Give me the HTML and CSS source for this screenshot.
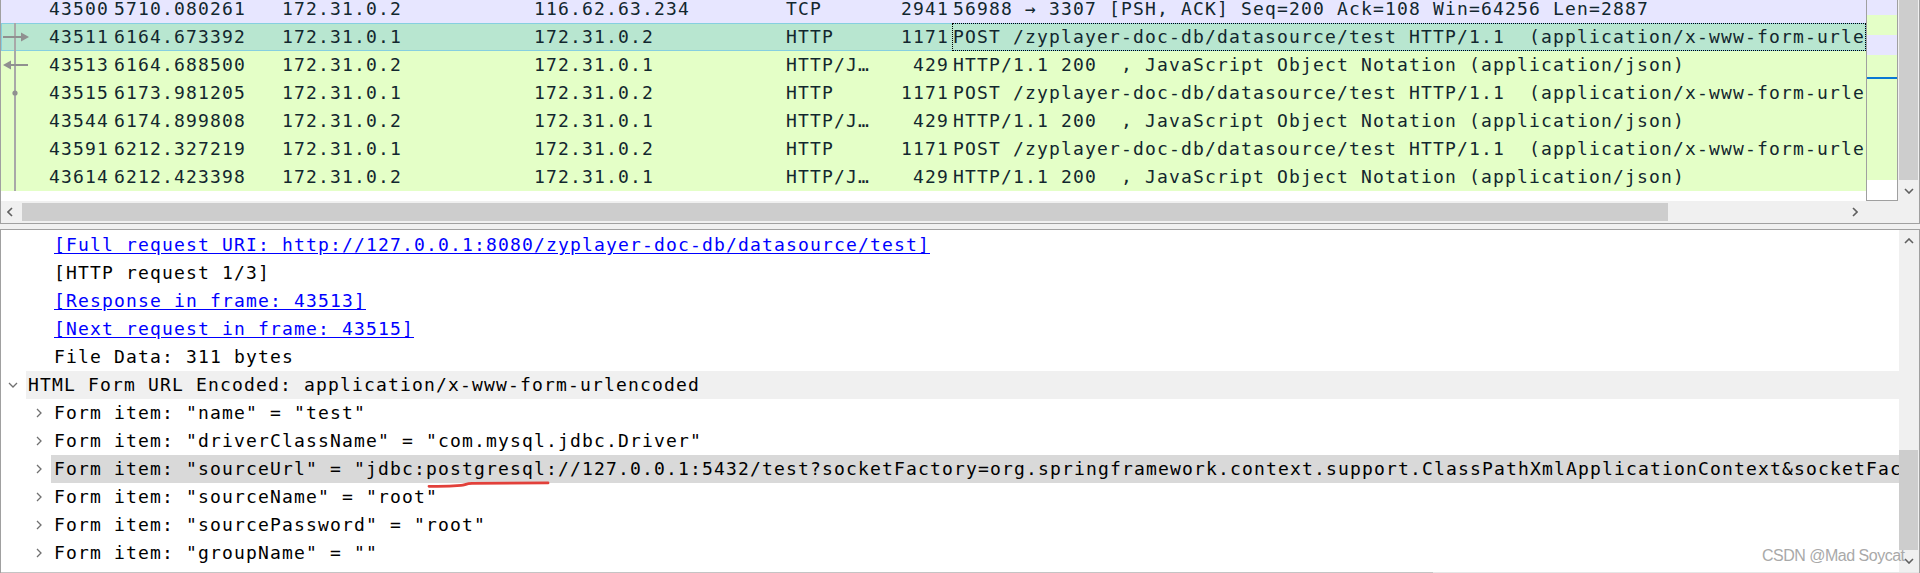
FILE: index.html
```html
<!DOCTYPE html>
<html>
<head>
<meta charset="utf-8">
<title>Wireshark</title>
<link rel="stylesheet" href="styles.css">
</head>
<body>
<div class="app">
  <section class="list-pane">
    <div class="list-main">
      <div class="list-view">
        <div class="rows">
          <div class="row tcp">
            <div class="c no"><span class="rel"></span><span class="num">43500</span></div>
            <div class="c time">5710.080261</div>
            <div class="c src">172.31.0.2</div>
            <div class="c dst">116.62.63.234</div>
            <div class="c proto">TCP</div>
            <div class="c len">2941</div>
            <div class="c info">56988 → 3307 [PSH, ACK] Seq=200 Ack=108 Win=64256 Len=2887</div>
          </div>
          <div class="row sel">
            <div class="c no"><span class="rel"><svg width="30" height="28" viewBox="0 0 30 28"><line x1="14" y1="0" x2="14" y2="28" stroke="#a8a8a8" stroke-width="2"/><line x1="2" y1="14" x2="21" y2="14" stroke="#909090" stroke-width="2"/><path d="M20 9.5 L28 14 L20 18.5Z" fill="#909090"/></svg></span><span class="num">43511</span></div>
            <div class="c time">6164.673392</div>
            <div class="c src">172.31.0.1</div>
            <div class="c dst">172.31.0.2</div>
            <div class="c proto">HTTP</div>
            <div class="c len">1171</div>
            <div class="c info">POST /zyplayer-doc-db/datasource/test HTTP/1.1  (application/x-www-form-urlencoded)</div>
          </div>
          <div class="row http">
            <div class="c no"><span class="rel"><svg width="30" height="28" viewBox="0 0 30 28"><line x1="14" y1="0" x2="14" y2="28" stroke="#a8a8a8" stroke-width="2"/><line x1="9" y1="14" x2="27" y2="14" stroke="#909090" stroke-width="2"/><path d="M2 14 L10 9.5 L10 18.5Z" fill="#909090"/></svg></span><span class="num">43513</span></div>
            <div class="c time">6164.688500</div>
            <div class="c src">172.31.0.2</div>
            <div class="c dst">172.31.0.1</div>
            <div class="c proto">HTTP/J…</div>
            <div class="c len">429</div>
            <div class="c info">HTTP/1.1 200  , JavaScript Object Notation (application/json)</div>
          </div>
          <div class="row http">
            <div class="c no"><span class="rel"><svg width="30" height="28" viewBox="0 0 30 28"><line x1="14" y1="0" x2="14" y2="28" stroke="#a8a8a8" stroke-width="2"/><circle cx="14" cy="14" r="2.6" fill="#909090"/></svg></span><span class="num">43515</span></div>
            <div class="c time">6173.981205</div>
            <div class="c src">172.31.0.1</div>
            <div class="c dst">172.31.0.2</div>
            <div class="c proto">HTTP</div>
            <div class="c len">1171</div>
            <div class="c info">POST /zyplayer-doc-db/datasource/test HTTP/1.1  (application/x-www-form-urlencoded)</div>
          </div>
          <div class="row http">
            <div class="c no"><span class="rel"><svg width="30" height="28" viewBox="0 0 30 28"><line x1="14" y1="0" x2="14" y2="28" stroke="#a8a8a8" stroke-width="2"/></svg></span><span class="num">43544</span></div>
            <div class="c time">6174.899808</div>
            <div class="c src">172.31.0.2</div>
            <div class="c dst">172.31.0.1</div>
            <div class="c proto">HTTP/J…</div>
            <div class="c len">429</div>
            <div class="c info">HTTP/1.1 200  , JavaScript Object Notation (application/json)</div>
          </div>
          <div class="row http">
            <div class="c no"><span class="rel"><svg width="30" height="28" viewBox="0 0 30 28"><line x1="14" y1="0" x2="14" y2="28" stroke="#a8a8a8" stroke-width="2"/></svg></span><span class="num">43591</span></div>
            <div class="c time">6212.327219</div>
            <div class="c src">172.31.0.1</div>
            <div class="c dst">172.31.0.2</div>
            <div class="c proto">HTTP</div>
            <div class="c len">1171</div>
            <div class="c info">POST /zyplayer-doc-db/datasource/test HTTP/1.1  (application/x-www-form-urlencoded)</div>
          </div>
          <div class="row http">
            <div class="c no"><span class="rel"><svg width="30" height="29" viewBox="0 0 30 29"><line x1="14" y1="0" x2="14" y2="29" stroke="#a8a8a8" stroke-width="2"/></svg></span><span class="num">43614</span></div>
            <div class="c time">6212.423398</div>
            <div class="c src">172.31.0.2</div>
            <div class="c dst">172.31.0.1</div>
            <div class="c proto">HTTP/J…</div>
            <div class="c len">429</div>
            <div class="c info">HTTP/1.1 200  , JavaScript Object Notation (application/json)</div>
          </div>
        </div>
      </div>
      <div class="minimap">
        <div class="mm mm-a"></div>
        <div class="mm mm-b"></div>
        <div class="mm mm-c"></div>
        <div class="mm mm-d"></div>
        <div class="mm mm-blue"></div>
        <div class="mm mm-e"></div>
        <div class="mm mm-f"></div>
      </div>
      <div class="vscroll">
        <div class="vs-thumb"></div>
        <div class="vs-btn"><svg width="10" height="6" viewBox="0 0 10 6"><polyline points="1,1 5,5 9,1" fill="none" stroke="#606060" stroke-width="1.6"/></svg></div>
      </div>
    </div>
    <div class="hscroll">
      <div class="hs-btn hs-left"><svg width="6" height="10" viewBox="0 0 6 10"><polyline points="5,1 1,5 5,9" fill="none" stroke="#606060" stroke-width="1.6"/></svg></div>
      <div class="hs-track"><div class="hs-thumb"></div></div>
      <div class="hs-btn hs-right"><svg width="6" height="10" viewBox="0 0 6 10"><polyline points="1,1 5,5 1,9" fill="none" stroke="#606060" stroke-width="1.6"/></svg></div>
      <div class="hs-corner"></div>
    </div>
  </section>
  <div class="splitter"></div>
  <section class="detail-pane">
    <div class="detail-main">
      <div class="tree">
        <div class="node l2 leaf"><span class="lbl"><span class="link">[Full request URI: http://127.0.0.1:8080/zyplayer-doc-db/datasource/test]</span></span></div>
        <div class="node l2 leaf"><span class="lbl">[HTTP request 1/3]</span></div>
        <div class="node l2 leaf"><span class="lbl"><span class="link">[Response in frame: 43513]</span></span></div>
        <div class="node l2 leaf"><span class="lbl"><span class="link">[Next request in frame: 43515]</span></span></div>
        <div class="node l2 leaf"><span class="lbl">File Data: 311 bytes</span></div>
        <div class="node l1"><span class="chev"><svg width="10" height="6" viewBox="0 0 10 6"><polyline points="1,1 5,5 9,1" fill="none" stroke="#707070" stroke-width="1.3"/></svg></span><span class="lbl hl">HTML Form URL Encoded: application/x-www-form-urlencoded</span></div>
        <div class="node l2"><span class="chev"><svg width="6" height="10" viewBox="0 0 6 10"><polyline points="1,1 5,5 1,9" fill="none" stroke="#707070" stroke-width="1.3"/></svg></span><span class="lbl">Form item: "name" = "test"</span></div>
        <div class="node l2"><span class="chev"><svg width="6" height="10" viewBox="0 0 6 10"><polyline points="1,1 5,5 1,9" fill="none" stroke="#707070" stroke-width="1.3"/></svg></span><span class="lbl">Form item: "driverClassName" = "com.mysql.jdbc.Driver"</span></div>
        <div class="node l2"><span class="chev"><svg width="6" height="10" viewBox="0 0 6 10"><polyline points="1,1 5,5 1,9" fill="none" stroke="#707070" stroke-width="1.3"/></svg></span><span class="lbl sel">Form item: "sourceUrl" = "jdbc:postgresql://127.0.0.1:5432/test?socketFactory=org.springframework.context.support.ClassPathXmlApplicationContext&amp;socketFactoryArg=http://127.0.0.1/bean.xml"</span></div>
        <div class="node l2"><span class="chev"><svg width="6" height="10" viewBox="0 0 6 10"><polyline points="1,1 5,5 1,9" fill="none" stroke="#707070" stroke-width="1.3"/></svg></span><span class="lbl">Form item: "sourceName" = "root"</span></div>
        <div class="node l2"><span class="chev"><svg width="6" height="10" viewBox="0 0 6 10"><polyline points="1,1 5,5 1,9" fill="none" stroke="#707070" stroke-width="1.3"/></svg></span><span class="lbl">Form item: "sourcePassword" = "root"</span></div>
        <div class="node l2"><span class="chev"><svg width="6" height="10" viewBox="0 0 6 10"><polyline points="1,1 5,5 1,9" fill="none" stroke="#707070" stroke-width="1.3"/></svg></span><span class="lbl">Form item: "groupName" = ""</span></div>
      </div>
      <div class="dvscroll">
        <div class="vs-btn dv-btn"><svg width="10" height="6" viewBox="0 0 10 6"><polyline points="1,5 5,1 9,5" fill="none" stroke="#606060" stroke-width="1.6"/></svg></div>
        <div class="dv-track"><div class="dv-thumb"></div></div>
        <div class="vs-btn dv-btn"><svg width="10" height="6" viewBox="0 0 10 6"><polyline points="1,1 5,5 9,1" fill="none" stroke="#606060" stroke-width="1.6"/></svg></div>
      </div>
    </div>
    <div class="dhscroll"></div>
  </section>
  <svg class="scribble" width="1920" height="573" viewBox="0 0 1920 573"><path d="M429 486.3 C440 486.6 452 486.2 461 485.4 C465 485 466 483.6 472 483.4 L548 482.9" fill="none" stroke="#e2403a" stroke-width="2.8" stroke-linecap="round"/></svg>
  <div class="watermark">CSDN @Mad Soycat</div>
</div>
</body>
</html>
```

FILE: styles.css
```css
* { box-sizing: border-box; margin: 0; padding: 0; }
html, body { width: 1920px; height: 573px; overflow: hidden; background: #ffffff; }
body {
  font-family: "DejaVu Sans Mono", monospace;
  font-size: 18px;
  letter-spacing: 1.163px;
}
.app { position: relative; width: 1920px; height: 573px; display: flex; flex-direction: column; }

/* packet list */
.list-pane { height: 224px; flex: none; border: 1px solid #a0a0a0; border-top: none; display: flex; flex-direction: column; }
.list-main { height: 201px; flex: none; display: flex; }
.list-view { width: 1865px; flex: none; overflow: hidden; background: #ffffff; }
.rows { margin-top: -5px; }
.row { display: flex; height: 28px; line-height: 28px; color: #12272e; white-space: pre; }
.row.tcp { background: #e7e6ff; }
.row.http { background: #e4ffc7; }
.row.sel { background: #b8e6d0; box-shadow: inset 0 0 0 1px #86cfe0; }
.c { flex: none; overflow: hidden; }
.no { width: 110px; display: flex; padding-right: 2px; }
.rel { width: 30px; flex: none; display: block; height: 28px; }
.rel svg { display: block; }
.num { flex: 1; text-align: right; }
.time { width: 168px; padding-left: 3px; }
.src, .dst { width: 252px; padding-left: 3px; }
.proto { width: 92px; padding-left: 3px; }
.len { width: 77px; text-align: right; padding-right: 3px; }
.info { width: 914px; padding-left: 1px; }
.row.sel .info { outline: 1px dotted #000000; outline-offset: -1px; }

.minimap { width: 32px; flex: none; border-left: 1px solid #a0a0a0; border-right: 1px solid #a0a0a0; border-bottom: 1px solid #a0a0a0; display: flex; flex-direction: column; background: #ffffff; }
.mm { flex: none; }
.mm-a { height: 15px; background: #e7e6ff; }
.mm-b { height: 20px; background: #e4ffc7; }
.mm-c { height: 20px; background: #e7e6ff; }
.mm-d { height: 22px; background: #e4ffc7; }
.mm-blue { height: 2px; background: #0a78d4; }
.mm-e { height: 101px; background: #e4ffc7; }
.mm-f { flex: 1; background: #ffffff; }

.vscroll { width: 21px; flex: none; background: #f0f0f0; display: flex; flex-direction: column; }
.vs-thumb { flex: 1; background: #cdcdcd; margin: 0 1px; }
.vs-btn { height: 21px; flex: none; display: flex; align-items: center; justify-content: center; }
.vs-btn svg { display: block; }

.hscroll { height: 22px; flex: none; display: flex; background: #f0f0f0; }
.hs-btn { width: 21px; flex: none; display: flex; align-items: center; justify-content: center; }
.hs-left { padding-right: 3px; }
.hs-right { width: 22px; }
.hs-track { width: 1822px; flex: none; padding-top: 2px; }
.hs-thumb { width: 1646px; height: 18px; background: #cdcdcd; }
.hs-corner { flex: 1; background: #f0f0f0; }

.splitter { height: 5px; flex: none; background: #f0f0f0; }

/* packet details */
.detail-pane { height: 344px; flex: none; border: 1px solid #a0a0a0; border-bottom: none; display: flex; flex-direction: column; }
.detail-main { height: 342px; flex: none; display: flex; }
.tree { width: 1898px; flex: none; overflow: hidden; padding-top: 1px; background: #ffffff; }
.node { display: flex; height: 28px; line-height: 28px; color: #000000; white-space: pre; }
.chev { flex: none; display: flex; align-items: center; }
.chev svg { display: block; }
.l1 .chev { width: 25px; padding-left: 7px; }
.l2 { padding-left: 25px; }
.l2 .chev { width: 26px; padding-left: 10px; }
.l2.leaf { padding-left: 51px; }
.lbl { flex: 1; min-width: 0; padding-left: 2px; overflow: hidden; }
.lbl.hl { background: #f0f0f0; }
.lbl.sel { background: #d9d9d9; margin-left: -1px; padding-left: 3px; }
.link { color: #0000ff; text-decoration: underline; text-underline-offset: 2px; }

.dvscroll { width: 20px; flex: none; background: #f0f0f0; display: flex; flex-direction: column; }
.dv-btn { height: 22px; }
.dv-track { flex: 1; display: flex; flex-direction: column; }
.dv-thumb { margin-top: auto; height: 100px; background: #cdcdcd; margin-left: 0; margin-right: 1px; }
.dhscroll { height: 1px; flex: none; background: linear-gradient(to right, #c4c4c4 0, #c4c4c4 1432px, #e6e6e6 1432px); }

/* overlays */
.scribble { position: absolute; left: 0; top: 0; pointer-events: none; }
.watermark {
  position: absolute; left: 1762px; top: 548px;
  font-family: "Liberation Sans", Arial, sans-serif;
  font-size: 16px; line-height: 16px; letter-spacing: -0.5px;
  color: #a9a9a9; white-space: nowrap;
}
```
